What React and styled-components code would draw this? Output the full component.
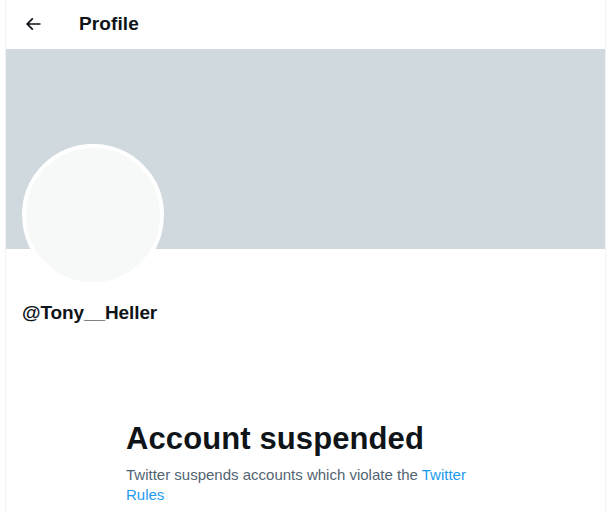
import React from "react";
import styled, { createGlobalStyle } from "styled-components";

const Global = createGlobalStyle`
  html, body { margin: 0; padding: 0; background: #ffffff; }
  body { font-family: "Liberation Sans", Arial, sans-serif; color: #0f1419; }
`;

const Column = styled.main`
  box-sizing: border-box;
  width: 601px;
  margin-left: 5px;
  min-height: 512px;
  border-left: 1px solid #eff3f4;
  border-right: 1px solid #eff3f4;
  display: flex;
  flex-direction: column;
`;

const Header = styled.header`
  height: 49px;
  display: flex;
  align-items: center;
  padding: 0 16px;
  box-sizing: border-box;
`;

const BackButton = styled.button`
  width: 57px;
  height: 34px;
  padding: 0 0 0 1px;
  border: none;
  background: transparent;
  display: flex;
  align-items: center;
  justify-content: flex-start;
  color: #0f1419;
  cursor: pointer;
  margin-top: -2px;
`;

const Title = styled.h2`
  margin: 0 0 2px 0;
  font-size: 19px;
  font-weight: 700;
  letter-spacing: 0.1px;
`;

const Banner = styled.div`
  height: 200px;
  background: #cfd9de;
`;

const ProfileInfo = styled.div`
  padding: 0 16px;
  display: flex;
  flex-direction: column;
`;

const Avatar = styled.div`
  width: 134px;
  height: 134px;
  margin-top: -105px;
  border-radius: 50%;
  border: 4px solid #ffffff;
  background: #f7f9f9;
`;

const Handle = styled.div`
  margin-top: 15px;
  font-size: 19px;
  font-weight: 700;
  line-height: 24px;
  letter-spacing: -0.1px;
`;

const Empty = styled.section`
  width: 360px;
  margin: 96px auto 0;
  padding-left: 1px;
`;

const EmptyTitle = styled.h1`
  margin: 0;
  font-size: 31px;
  line-height: 36px;
  font-weight: 700;
  letter-spacing: 0.1px;
`;

const EmptyText = styled.p`
  margin: 8px 0 0;
  font-size: 15px;
  line-height: 20px;
  color: #536471;
`;

const Link = styled.a`
  color: #1d9bf0;
  text-decoration: none;
`;

export default function App() {
  return (
    <>
      <Global />
      <Column>
        <Header>
          <BackButton aria-label="Back">
            <svg viewBox="0 0 24 24" width="20" height="20" fill="currentColor">
              <path d="M7.414 13l5.043 5.04-1.414 1.42L3.586 12l7.457-7.46 1.414 1.42L7.414 11H21v2H7.414z" />
            </svg>
          </BackButton>
          <Title>Profile</Title>
        </Header>
        <Banner />
        <ProfileInfo>
          <Avatar />
          <Handle>@Tony__Heller</Handle>
        </ProfileInfo>
        <Empty>
          <EmptyTitle>Account suspended</EmptyTitle>
          <EmptyText>
            Twitter suspends accounts which violate the <Link href="#">Twitter Rules</Link>
          </EmptyText>
        </Empty>
      </Column>
    </>
  );
}
